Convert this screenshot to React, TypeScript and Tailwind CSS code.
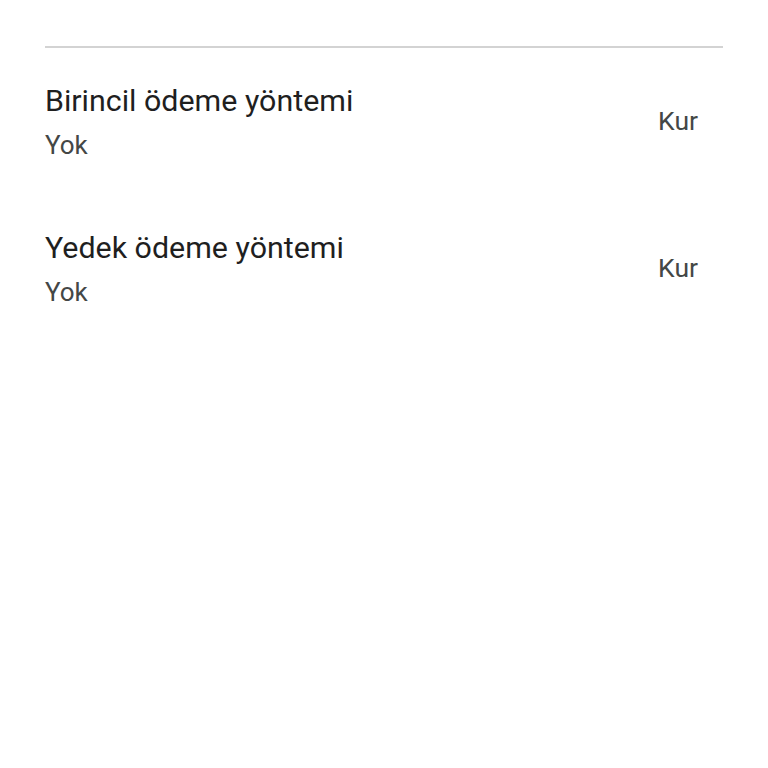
import React from "react";

function Row({ title }: { title: string }) {
  return (
    <div className="flex items-center justify-between">
      <div className="flex flex-col">
        <div className="text-[30.4px] leading-[36px] text-[#1f1f1f]">{title}</div>
        <div className="mt-[12px] text-[26px] leading-[28px] text-[#444746]">Yok</div>
      </div>
      <div className="mr-[25px] text-[26.5px] leading-[28px] text-[#444746]">Kur</div>
    </div>
  );
}

export default function App() {
  return (
    <div className="h-[768px] w-[768px] bg-white" style={{ fontFamily: "Roboto, 'Noto Sans', sans-serif" }}>
      <div className="px-[45px] pt-[46px]">
        <div className="h-[2px] w-[678px] bg-[#d3d3d3]" />
        <div className="mt-[35px] flex flex-col gap-[71px]">
          <Row title="Birincil ödeme yöntemi" />
          <Row title="Yedek ödeme yöntemi" />
        </div>
      </div>
    </div>
  );
}
